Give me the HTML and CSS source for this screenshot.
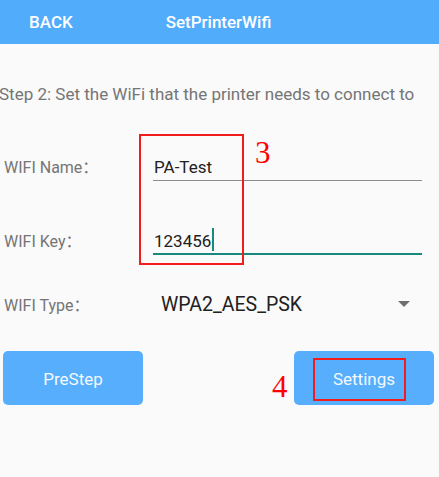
FILE: index.html
```html
<!DOCTYPE html>
<html>
<head>
<meta charset="utf-8">
<link rel="stylesheet" href="styles.css">
</head>
<body>
<div class="page">
  <header class="bar">
    <span class="back">BACK</span>
    <span class="title">SetPrinterWifi</span>
    <span></span>
  </header>
  <p class="step">Step 2: Set the WiFi that the printer needs to connect to</p>
  <div class="row row-name">
    <span class="label">WIFI Name：</span>
    <div class="field">PA-Test</div>
  </div>
  <div class="row row-key">
    <span class="label">WIFI Key：</span>
    <div class="field focused">123456<span class="cursor"></span></div>
  </div>
  <div class="row row-type">
    <span class="label">WIFI Type：</span>
    <div class="spinner">
      <span class="spin-text">WPA2_AES_PSK</span>
      <span class="caret"></span>
    </div>
  </div>
  <div class="actions">
    <button class="btn">PreStep</button>
    <button class="btn">Settings</button>
  </div>
  <div class="mark box-3"></div>
  <div class="num num-3">3</div>
  <div class="mark box-4"></div>
  <div class="num num-4">4</div>
</div>
</body>
</html>
```
FILE: styles.css
```css
html, body {
  margin: 0;
  padding: 0;
  background: #fafafa;
}
.page {
  position: relative;
  width: 439px;
  height: 477px;
  overflow: hidden;
  font-family: Roboto, "Noto Sans CJK SC", sans-serif;
}
.bar {
  height: 44px;
  background: #52acfc;
  display: grid;
  grid-template-columns: 1fr auto 1fr;
  align-items: center;
  color: #ffffff;
  font-size: 17px;
  font-weight: 500;
  line-height: 20px;
}
.back {
  padding-left: 29px;
}
.title {
  position: relative;
  left: -1px;
}
.step {
  margin: 40px 0 0 -1px;
  font-size: 17px;
  line-height: 20px;
  color: #757575;
  white-space: nowrap;
}
.row {
  display: flex;
  align-items: baseline;
}
.row-name { margin-top: 53px; }
.row-key { margin-top: 50px; }
.row-type { margin-top: 39px; }
.label {
  width: 149px;
  padding-left: 4px;
  flex: none;
  font-size: 16px;
  line-height: 20px;
  color: #757575;
}
.field {
  flex: 1;
  margin-right: 17px;
  padding-left: 1px;
  font-size: 17px;
  line-height: 20px;
  color: #212121;
  padding-bottom: 3px;
  border-bottom: 1px solid #8d8d8d;
}
.field.focused {
  padding-bottom: 2px;
  border-bottom: 2px solid #17897f;
}
.cursor {
  display: inline-block;
  width: 2px;
  height: 23px;
  margin-top: -3px;
  margin-left: 1px;
  vertical-align: top;
  background: #17897f;
}
.spinner {
  flex: 1;
  display: flex;
  align-items: center;
  padding-left: 8px;
  margin-right: 29px;
}
.spin-text {
  flex: 1;
  font-size: 19.5px;
  line-height: 22px;
  color: #212121;
}
.caret {
  width: 0;
  height: 0;
  border-left: 6px solid transparent;
  border-right: 6px solid transparent;
  border-top: 6px solid #6f6f6f;
  margin-bottom: 2px;
}
.actions {
  margin-top: 35px;
  padding: 0 5px 0 3px;
  display: flex;
  justify-content: space-between;
}
.btn {
  width: 140px;
  height: 54px;
  border: none;
  border-radius: 5px;
  background: #56aefd;
  color: #f4f9ff;
  font-family: Roboto, sans-serif;
  font-size: 17px;
  line-height: 20px;
  padding: 2px 0 0;
}
.mark {
  position: absolute;
  border: 2px solid #f21c1c;
  box-sizing: border-box;
}
.box-3 {
  left: 139px;
  top: 134px;
  width: 105px;
  height: 131px;
}
.box-4 {
  left: 313px;
  top: 358px;
  width: 93px;
  height: 43px;
}
.num {
  position: absolute;
  font-family: "Liberation Serif", serif;
  font-size: 31px;
  line-height: 31px;
  color: #ff0000;
}
.num-3 {
  left: 255px;
  top: 137px;
}
.num-4 {
  left: 272px;
  top: 371px;
}
```
